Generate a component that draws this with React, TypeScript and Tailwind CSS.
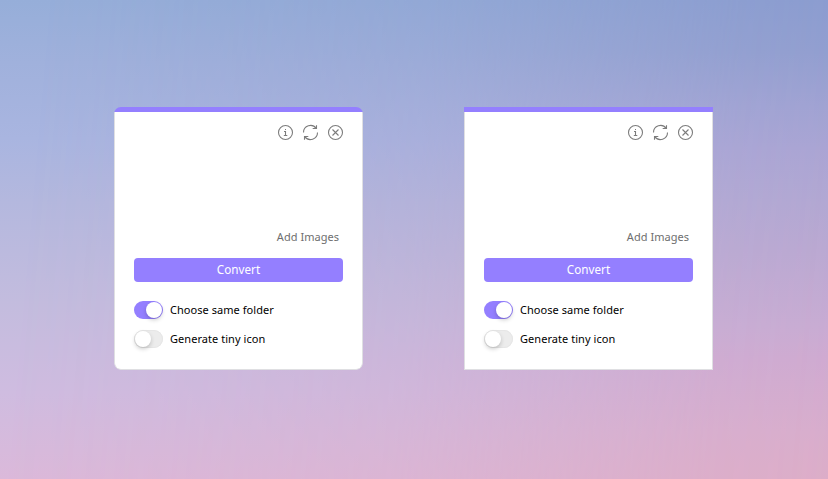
import clsx from 'clsx';

function InfoIcon() {
  return (
    <svg width="17" height="17" viewBox="0 0 17 17" fill="none" stroke="#7c7c7c" strokeWidth="1.1">
      <circle cx="8.5" cy="8.5" r="7" />
      <path d="M7 7.5h1.5V11M6.8 11.5h3.5" />
      <path d="M8 5.5h1" />
    </svg>
  );
}

function RefreshIcon() {
  return (
    <svg width="17" height="17" viewBox="0 0 17 17" fill="none" stroke="#7c7c7c" strokeWidth="1.1">
      <path d="M1.5 8.5A7 7 0 0 1 14.2 4.4M14.5 1.2v3.3h-3.8" />
      <path d="M15.5 8.5A7 7 0 0 1 2.8 12.6M2.5 15.8v-3.3H6.3" />
    </svg>
  );
}

function CloseIcon() {
  return (
    <svg width="17" height="17" viewBox="0 0 17 17" fill="none" stroke="#7c7c7c" strokeWidth="1.1">
      <circle cx="8.5" cy="8.5" r="7" />
      <path d="M5.5 5.5l6 6M11.5 5.5l-6 6" />
    </svg>
  );
}

function Toggle({ label, on }: { label: string; on: boolean }) {
  return (
    <div className="flex h-[18px] items-center">
      <button
        role="switch"
        aria-checked={on}
        aria-label={label}
        className={clsx(
          'flex h-[18px] w-[29px] items-center rounded-full px-px',
          on
            ? 'justify-end bg-[#947fff]'
            : 'justify-start bg-[#ececec] shadow-[inset_0_0_0_1px_#e6e6e6]',
        )}
      >
        <span className="size-4 rounded-full bg-white shadow-[0_2px_4px_rgba(0,0,0,0.2)]" />
      </button>
      <span className="ml-[7px] text-[11px] leading-[18px] tracking-[0.05px] text-black">{label}</span>
    </div>
  );
}

function ConverterCard({ rounded }: { rounded: boolean }) {
  return (
    <section
      className={clsx(
        'flex h-[263px] w-[249px] flex-col overflow-hidden',
        rounded && 'rounded-[7px]',
      )}
    >
      <div className="h-[5px] shrink-0 bg-[#947fff]" />
      <div
        className={clsx(
          'flex flex-1 flex-col border border-t-0 border-[#dfdfe2] bg-white px-[19px]',
          rounded && 'rounded-b-[7px]',
        )}
      >
        <div className="-mr-px mt-3 flex justify-end gap-2">
          <InfoIcon />
          <RefreshIcon />
          <CloseIcon />
        </div>
        <div className="mt-[88px] pr-1 text-right text-[11px] leading-4 tracking-[0.03px] text-[#6e6e6e]">Add Images</div>
        <button className="mt-[13px] h-6 rounded-[4px] bg-[#947fff] pb-px text-[11.7px] leading-[23px] text-white">
          Convert
        </button>
        <div className="mt-[19px] flex flex-col gap-[11px]">
          <Toggle label="Choose same folder" on />
          <Toggle label="Generate tiny icon" on={false} />
        </div>
      </div>
    </section>
  );
}

export default function App() {
  return (
    <main className="relative h-[479px] w-[828px] overflow-hidden bg-[linear-gradient(180deg,#96aed9_0%,#a0b1dc_13%,#a9b5e0_29%,#b4b8de_42%,#c3bcde_63%,#cfbce0_82%,#dbb9da_100%)] font-['Noto_Sans',sans-serif]">
      <div className="absolute inset-0 bg-[linear-gradient(180deg,#8b9ccf_0%,#929ecf_11%,#a0a2d2_22%,#aaa4d3_31%,#b2a7d2_42%,#baa8d1_52%,#c8abd2_68%,#cfaad0_75%,#d8adcc_90%,#dcadc8_100%)] [mask-image:linear-gradient(95deg,transparent_5%,rgba(0,0,0,0.32)_50%,rgba(0,0,0,0.9)_86%,black)]" />
      <div className="relative flex gap-[101px] pl-[114px] pt-[107px]">
        <ConverterCard rounded />
        <ConverterCard rounded={false} />
      </div>
    </main>
  );
}
